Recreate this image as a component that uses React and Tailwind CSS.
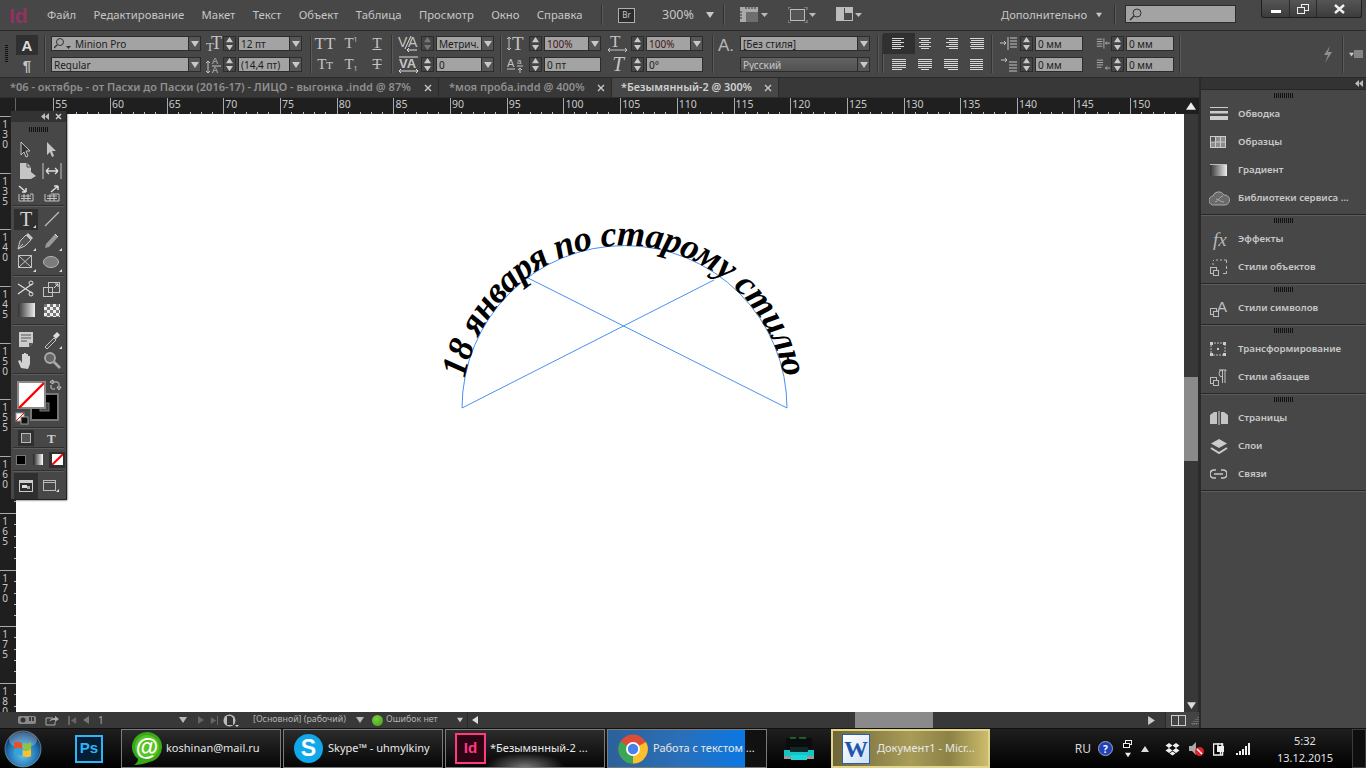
import React from "react";

const Tri = ({ d = "down", c = "#c8c8c8", s = 7 }) => (
  <svg width={s} height={s} viewBox="0 0 8 8" className="shrink-0">
    <polygon fill={c} points={d === "down" ? "0,1 8,1 4,7" : d === "up" ? "0,7 8,7 4,1" : d === "left" ? "7,0 7,8 1,4" : "1,0 1,8 7,4"} />
  </svg>
);

const Sep = ({ ml = "" }) => <div className={`w-px h-[38px] bg-[#333] border-r border-[#5a5a5a] box-content shrink-0 ${ml}`} />;

const Spinner = ({ dim }) => (
  <div className="w-[13px] h-[15px] shrink-0 bg-[#444] border border-[#2c2c2c] flex flex-col items-center justify-center gap-px">
    <Tri d="up" s={7} c={dim ? "#777" : "#c8c8c8"} />
    <Tri d="down" s={7} c={dim ? "#777" : "#c8c8c8"} />
  </div>
);

const Field = ({ w, text, arrow, color = "text-[#1d1d1d]", dark, icon }) => (
  <div className={`${w} h-[15px] shrink-0 flex border border-[#2c2c2c] ${dark ? "bg-[linear-gradient(#626262,#525252)]" : "bg-[#a3a3a3]"}`}>
    <div className={`flex-1 min-w-0 flex items-center pl-[2px] text-[10px] leading-none whitespace-nowrap overflow-hidden ${dark ? "text-[#c8c8c8]" : color}`}>
      {icon}
      {text}
    </div>
    {arrow && (
      <div className="w-[12px] bg-[#565656] border-l border-[#2c2c2c] flex items-center justify-center">
        <Tri s={8} />
      </div>
    )}
  </div>
);

const I = ({ w = 20, h = 20, vb, children, className = "" }) => (
  <svg width={w} height={h} viewBox={vb || `0 0 ${w} ${h}`} className={`shrink-0 ${className}`} fill="none">
    {children}
  </svg>
);

const Corner = () => <polygon points="17,20 20,17 20,20" fill="#ddd" />;
const L = "#c4c4c4";

const Row2 = ({ a, b, className = "" }) => (
  <div className={`flex flex-col gap-[6px] shrink-0 ${className}`}>
    <div className="flex items-center h-[15px]">{a}</div>
    <div className="flex items-center h-[15px]">{b}</div>
  </div>
);

const Serif = ({ children, className = "" }) => (
  <span className={`font-['Liberation_Serif'] text-[#c4c4c4] leading-none ${className}`}>{children}</span>
);

const AlignIcon = ({ widths, x = "l" }) => (
  <I w={14} h={14}>
    {widths.map((wd, i) => (
      <rect key={i} x={x === "l" ? 0 : x === "c" ? (14 - wd) / 2 : 14 - wd} y={1 + i * 2} width={wd} height="1" fill="#d8d8d8" />
    ))}
  </I>
);

const Menu = ["Файл", "Редактирование", "Макет", "Текст", "Объект", "Таблица", "Просмотр", "Окно", "Справка"];

function TitleBar() {
  return (
    <div className="h-[31px] shrink-0 flex items-center bg-[#474747] border-b border-[#2a2a2a] text-[#c6c6c6] text-[11.3px]">
      <div className="w-[47px] pl-[9px] font-['Liberation_Sans'] font-bold text-[21px] leading-none text-[#94325f]">Id</div>
      <div className="w-[554px] flex gap-[17.4px] whitespace-nowrap">
        {Menu.map((m) => (
          <span key={m}>{m}</span>
        ))}
      </div>
      <div className="w-px h-[20px] bg-[#303030] border-r border-[#5a5a5a] box-content" />
      <div className="ml-[15px] w-[17px] h-[15px] border border-[#b0b0b0] bg-[#2c2c2c] flex items-center justify-center text-[8px] leading-none">Br</div>
      <span className="ml-[27px] w-[44px] text-[12.5px]">300%</span>
      <Tri s={8} />
      <div className="ml-[9px] w-px h-[20px] bg-[#303030] border-r border-[#5a5a5a] box-content" />
      <I w={28} h={16} className="ml-[15px]">
        <rect x="0" y="0" width="18" height="15" fill="#aaa" />
        <rect x="6" y="5" width="12" height="10" fill="#6e6e6e" />
        <path d="M6 0v2M9 0v2M12 0v2M15 0v2M0 5h2M0 8h2M0 11h2" stroke="#333" />
        <polygon points="21,6 28,6 24.5,10" fill="#bbb" />
      </I>
      <I w={28} h={16} className="ml-[20px]">
        <rect x="2.5" y="2.5" width="14" height="11" stroke="#bbb" fill="#555" />
        <path d="M0 3V0h3M16 0h3v3M0 13v3h3M19 13v3h-3" stroke="#999" />
        <polygon points="21,6 28,6 24.5,10" fill="#bbb" />
      </I>
      <I w={26} h={16} className="ml-[20px]">
        <rect x="0.5" y="0.5" width="16" height="13" stroke="#bbb" fill="#4a4a4a" />
        <rect x="1" y="1" width="7" height="12" fill="#bdbdbd" />
        <rect x="9" y="1" width="7" height="5" fill="#bdbdbd" />
        <polygon points="19,6 26,6 22.5,10" fill="#bbb" />
      </I>
      <div className="ml-[139px] w-[95px] text-[11.2px] whitespace-nowrap">Дополнительно</div>
      <Tri s={6} />
      <div className="ml-[12px] w-px h-[20px] bg-[#303030] border-r border-[#5a5a5a] box-content" />
      <div className="ml-[9px] w-[111px] h-[18px] bg-[#a3a3a3] border border-[#2c2c2c] flex items-center pl-[2px] self-start mt-[5px]">
        <I w={15} h={15}>
          <circle cx="9" cy="6" r="4" stroke="#333" />
          <path d="M6 9L2 13" stroke="#333" strokeWidth="1.5" />
        </I>
      </div>
      <div className="ml-[25px] w-[101px] h-[18px] self-start flex bg-[linear-gradient(#555,#3c3c3c)] border border-t-0 border-[#1f1f1f] rounded-b-[3px]">
        <div className="w-[28px] flex items-end justify-center pb-[4px] border-r border-[#2a2a2a]"><div className="w-[10px] h-[3px] bg-white" /></div>
        <div className="w-[27px] flex items-center justify-center border-r border-[#2a2a2a]">
          <I w={12} h={10}>
            <rect x="4.5" y="0.5" width="7" height="6" stroke="#eee" />
            <rect x="0.5" y="3.5" width="7" height="6" stroke="#eee" fill="#4a4a4a" />
          </I>
        </div>
        <div className="flex-1 flex items-center justify-center">
          <I w={11} h={10}><path d="M1 1l9 8M10 1L1 9" stroke="#eee" strokeWidth="2.4" /></I>
        </div>
      </div>
    </div>
  );
}

const SVGT = ({ x, y, s, children, f = "Liberation Serif", w = 400, st = "normal" }) => (
  <text x={x} y={y} fontSize={s} fill="#c4c4c4" fontFamily={f} fontWeight={w} fontStyle={st}>{children}</text>
);

function ControlBar() {
  const mm = <Field w="w-[48px]" text="0 мм" />;
  return (
    <div className="h-[47px] shrink-0 flex items-center bg-[#474747] border-b border-[#2a2a2a]">
      <div className="w-[44px] shrink-0 flex items-center">
        <div className="ml-[5px] w-[3px] h-[18px] bg-[repeating-linear-gradient(#111_0,#111_1px,transparent_1px,transparent_2px)]" />
        <div className="ml-[8px] w-[22px] flex flex-col items-center gap-[3px]">
          <div className="w-[22px] h-[20px] bg-[#303030] flex items-center justify-center text-[#ddd] text-[15px] leading-none font-['Liberation_Sans'] font-bold">A</div>
          <span className="text-[#c4c4c4] text-[15px] leading-none font-['Liberation_Sans'] font-bold">¶</span>
        </div>
      </div>
      <Sep />
      <Row2
        className="ml-[5px]"
        a={<>
          <Field w="w-[150px]" arrow text="Minion Pro" icon={<I w={20} h={13} vb="0 0 20 13" className="mr-px"><circle cx="6" cy="5" r="3.5" stroke="#333" /><path d="M3 8L0 11" stroke="#333" strokeWidth="1.4" /><polygon points="12,9 17,9 14.5,12" fill="#333" /></I>} />
          <I w={17} h={17} className="ml-[5px]"><SVGT x="0" y="16" s="13">T</SVGT><SVGT x="5" y="14" s="18">T</SVGT></I>
          <Spinner /><span className="w-[2px]" /><Field w="w-[64px]" arrow text="12 пт" />
        </>}
        b={<>
          <Field w="w-[150px]" arrow text="Regular" />
          <I w={17} h={18} className="ml-[5px]"><path d="M2 5v12M0 7l2-2 2 2M0 15l2 2 2-2" stroke={L} /><SVGT x="6" y="8" s="9" f="Liberation Sans">A</SVGT><SVGT x="6" y="17" s="9" f="Liberation Sans">A</SVGT><path d="M6 10h9" stroke={L} /></I>
          <Spinner /><span className="w-[2px]" /><Field w="w-[64px]" arrow text="(14,4 пт)" />
        </>}
      />
      <Sep ml="ml-[8px]" />
      <div className="w-[79px] shrink-0 grid grid-cols-[26px_26px_26px] gap-y-[6px]">
        {[["TT", ""], ["T", "1"], ["T", "_"], ["Tт", ""], ["T", "₁"], ["T", "-"]].map(([t, x], i) => (
          <div key={i} className="h-[15px] flex items-center justify-center">
            <Serif className={`text-[15px] ${t === "TT" ? "text-[17px]" : ""} ${x === "_" ? "underline" : x === "-" ? "line-through" : ""}`}>{t}</Serif>
            {x === "1" && <span className="text-[7px] text-[#c4c4c4] leading-none self-start">1</span>}
            {x === "₁" && <span className="text-[7px] text-[#c4c4c4] leading-none self-end">1</span>}
          </div>
        ))}
      </div>
      <Sep />
      <Row2
        className="ml-[5px]"
        a={<>
          <I w={21} h={17}><SVGT x="0" y="12" s="14" f="Liberation Sans">V</SVGT><SVGT x="10" y="12" s="14" f="Liberation Sans">A</SVGT><path d="M7 14L13 1" stroke="#ddd" /><path d="M9 15h10M9 15l2-2M9 15l2 2" stroke="#ddd" /></I>
          <span className="w-[2px]" /><Spinner dim /><span className="w-[2px]" /><Field w="w-[58px]" arrow text="Метрич." />
        </>}
        b={<>
          <I w={21} h={17}><path d="M1 1h19" stroke="#ddd" /><SVGT x="1" y="12" s="13" f="Liberation Sans" w={700}>VA</SVGT><path d="M1 15h19M1 15l2-2M1 15l2 2M20 15l-2-2M20 15l-2 2" stroke="#ddd" /></I>
          <span className="w-[2px]" /><Spinner /><span className="w-[2px]" /><Field w="w-[58px]" arrow text="0" />
        </>}
      />
      <Sep ml="ml-[6px]" />
      <Row2
        className="ml-[5px]"
        a={<>
          <I w={20} h={17}><path d="M2 2v13M0 4l2-2 2 2M0 13l2 2 2-2" stroke={L} /><SVGT x="5" y="15" s="19">T</SVGT></I>
          <span className="w-[2px]" /><Spinner /><span className="w-[2px]" /><Field w="w-[57px]" arrow text="100%" color="text-[#451414]" />
          <I w={20} h={17} className="ml-[7px]"><SVGT x="2" y="12" s="17">T</SVGT><path d="M0 15h19M0 15l2-2M0 15l2 2M19 15l-2-2M19 15l-2 2" stroke={L} /></I>
          <span className="w-[3px]" /><Spinner /><span className="w-[2px]" /><Field w="w-[57px]" arrow text="100%" color="text-[#451414]" />
        </>}
        b={<>
          <I w={20} h={17}><SVGT x="0" y="11" s="11" f="Liberation Sans">A</SVGT><SVGT x="10" y="8" s="8" f="Liberation Sans">a</SVGT><path d="M0 13h8M10 10h6M13 17v-5M11 14l2-2 2 2" stroke={L} /></I>
          <span className="w-[2px]" /><Spinner /><span className="w-[2px]" /><Field w="w-[57px]" text="0 пт" />
          <Serif className="w-[20px] ml-[7px] text-[21px] italic text-center">T</Serif><span className="w-[3px]" /><Spinner /><span className="w-[2px]" /><Field w="w-[57px]" text="0°" />
        </>}
      />
      <Sep ml="ml-[9px]" />
      <div className="w-[28px] shrink-0 ml-[4px] flex items-start mb-[18px] text-[#b8b8b8] text-[17px] leading-none font-['Liberation_Sans']">A.</div>
      <div className="flex flex-col gap-[6px] shrink-0 ml-[-6px]">
        <Field w="w-[130px]" arrow text="[Без стиля]" />
        <Field w="w-[130px]" arrow dark text="Русский" />
      </div>
      <Sep ml="ml-[7px]" />
      <Sep ml="ml-[3px]" />
      <div className="w-[105px] shrink-0 ml-[2px] grid grid-cols-[26px_26px_26px_26px] gap-y-[6px]">
        {[
          [[12, 9, 12, 9, 12, 9], "l"], [[12, 8, 12, 8, 12, 8], "c"], [[12, 9, 12, 9, 12, 9], "r"], [[14, 13, 14, 13, 14, 13], "r"],
          [[14, 14, 14, 14, 14, 10], "l"], [[14, 14, 14, 14, 14, 8], "c"], [[14, 14, 14, 14, 14, 10], "r"], [[13, 13, 13, 13, 13, 13], "l"],
        ].map(([w, x], i) => (
          <div key={i} className={`h-[15px] flex items-center justify-center ${i === 0 ? "bg-[#303030] outline-3 outline-[#303030]" : ""}`}>
            <AlignIcon widths={w} x={x} />
          </div>
        ))}
      </div>
      <Sep />
      <Row2
        className="ml-[7px]"
        a={<>
          <I w={20} h={15}><path d="M0 7h6M4 5l2 2-2 2" stroke={L} /><path d="M8 1v13" stroke={L} /><path d="M10 2h7M10 5h7M10 8h7M10 11h7" stroke={L} /></I><Spinner /><span className="w-[2px]" />{mm}
          <I w={15} h={15} vb="0 0 19 15" className="ml-[13px]"><path d="M1 2h7M1 5h7M1 8h7M1 11h7M10 1v13" stroke={L} /><path d="M18 7h-6M14 5l-2 2 2 2" stroke={L} /></I><Spinner /><span className="w-[2px]" />{mm}
        </>}
        b={<>
          <I w={20} h={15}><path d="M1 3h6M5 1l2 2-2 2" stroke={L} /><path d="M9 5h8M9 8h8M9 11h8M9 14h8" stroke={L} /></I><Spinner /><span className="w-[2px]" />{mm}
          <I w={15} h={15} vb="0 0 19 15" className="ml-[13px]"><path d="M1 2h8M1 5h8M1 8h8M1 11h6" stroke={L} /><path d="M18 12h-6M14 10l-2 2 2 2" stroke={L} /></I><Spinner /><span className="w-[2px]" />{mm}
        </>}
      />
      <Sep ml="ml-[5px]" />
      <div className="w-[161px] shrink-0 flex justify-end pr-[8px]">
        <I w={12} h={17}><polygon points="8,0 2,9 6,9 3,17 10,6 6,6" fill="#8e8e8e" /></I>
      </div>
      <Sep />
      <div className="ml-[5px] flex items-center">
        <Tri s={5} />
        <I w={9} h={9}><path d="M0 1h9M0 3h9M0 5h9M0 7h9" stroke="#c4c4c4" /></I>
      </div>
    </div>
  );
}

function Tabs() {
  const Tab = ({ t, w, x, active, size }) => (
    <div className={`${w} h-full shrink-0 flex items-center border-r border-[#2a2a2a] font-semibold whitespace-nowrap ${size} ${active ? "bg-[#474747] text-[#d0d0d0]" : "text-[#8f8f8f]"}`}>
      <span className={`flex-1 min-w-0 ${x}`}>{t}</span>
      <I w={8} h={8} className="mr-[6px]"><path d="M1 1l6 6M7 1L1 7" stroke="#c8c8c8" strokeWidth="1.4" /></I>
    </div>
  );
  return (
    <div className="h-[19px] shrink-0 flex bg-[#383838] border-b border-[#2e2e2e] box-content">
      <Tab w="w-[439px]" size="text-[11px]" x="pl-[10px]" t="*06 - октябрь - от Пасхи до Пасхи (2016-17) - ЛИЦО - выгонка .indd @ 87%" />
      <Tab w="w-[173px]" size="text-[11px]" x="pl-[10px]" t="*моя проба.indd @ 400%" />
      <Tab w="w-[167px]" size="text-[10.8px]" x="pl-[9px]" active t="*Безымянный-2 @ 300%" />
    </div>
  );
}

const H = [55, 60, 65, 70, 75, 80, 85, 90, 95, 100, 105, 110, 115, 120, 125, 130, 135, 140, 145, 150];
const V = [130, 135, 140, 145, 150, 155, 160, 165, 170, 175, 180];

function TopRuler() {
  return (
    <div className="h-[16px] shrink-0 flex bg-[#1f1f1f] text-[#c8c8c8] overflow-hidden">
      <div className="w-[53.3px] shrink-0 relative">
        <div className="absolute left-0 top-0 w-[16px] h-full border-r border-[#666]" />
      </div>
      {H.map((n) => (
        <div key={n} className="w-[56.7px] shrink-0 h-full border-l border-[#aaa] flex flex-col justify-between">
          <span className="pl-[1px] text-[10.5px] leading-[13px]">{n}</span>
          <div className="h-[2px] bg-[repeating-linear-gradient(90deg,transparent_0,transparent_10.3px,#bbb_10.3px,#bbb_11.34px)]" />
        </div>
      ))}
    </div>
  );
}

function LeftRuler() {
  return (
    <div className="w-[16px] shrink-0 bg-[#1f1f1f] text-[#c8c8c8] overflow-hidden flex flex-col pt-[2px]">
      {V.map((n) => (
        <div key={n} className="h-[56.7px] shrink-0 border-t border-[#aaa] flex">
          <div className="flex flex-col items-center w-[10px] pt-[2px] text-[10px] leading-[10px]">
            {String(n).split("").map((d, i) => <span key={i}>{d}</span>)}
          </div>
          <div className="w-[2px] ml-auto bg-[repeating-linear-gradient(transparent_0,transparent_10.3px,#bbb_10.3px,#bbb_11.34px)]" />
        </div>
      ))}
    </div>
  );
}

function Canvas() {
  return (
    <div className="flex-1 min-w-0 bg-white relative overflow-hidden">
      <svg className="absolute inset-0" width="1168" height="599" viewBox="16 113 1168 599" fill="none">
        <path id="arc" d="M462 407A162.5 162.5 0 0 1 787 407" stroke="#4a90f0" strokeWidth="1" />
        <path d="M462 407L714 279M787 407L528 277" stroke="#4a90f0" strokeWidth="1" />
        <text fontFamily="Liberation Serif" fontStyle="italic" fontWeight="700" fontSize="36" fill="#000">
          <textPath href="#arc" startOffset="30" textLength="450" lengthAdjust="spacing">18 января по старому стилю</textPath>
        </text>
      </svg>
    </div>
  );
}

function VScroll() {
  return (
    <div className="w-[14px] shrink-0 bg-[#383838] flex flex-col items-center">
      <div className="h-[263px] w-full flex justify-center"><span className="mt-[-13px] h-0"><Tri d="up" s={10} c="#eee" /></span></div>
      <div className="h-[84px] w-full bg-[#8a8a8a]" />
      <div className="flex-1" />
      <div className="h-[14px] flex items-center"><Tri s={9} c="#ddd" /></div>
    </div>
  );
}

const T = ({ children }) => (
  <div className="w-[26px] h-[21.5px] flex items-center justify-center">
    <I w={20} h={20}>{children}</I>
  </div>
);
const TS = () => <div className="h-px mx-[2px] bg-[#2f2f2f] border-b border-[#5c5c5c] box-content" />;

function Toolbox() {
  return (
    <div className="absolute left-[11px] top-[111px] w-[56px] h-[389px] bg-[#474747] border-r border-b border-[#222] shadow-[0_0_2px_#222] flex flex-col z-10">
      <div className="h-[11px] bg-[#333] flex items-center justify-end gap-[6px] pr-[4px] shrink-0">
        <I w={8} h={7}><polygon points="4,0 4,7 0,3.5" fill="#bbb" /><polygon points="8,0 8,7 4,3.5" fill="#bbb" /></I>
        <I w={7} h={7}><path d="M1 1l5 5M6 1L1 6" stroke="#ccc" strokeWidth="1.5" /></I>
      </div>
      <div className="h-[17px] shrink-0 flex items-center justify-center pb-[2px]">
        <div className="w-[20px] h-[5px] bg-[repeating-linear-gradient(90deg,#111_0,#111_1px,transparent_1px,transparent_2px)]" />
      </div>
      <div className="grid grid-cols-2 px-[2px]">
        <T><path d="M5 2l9 9h-4l2 5-2 1-2-5-3 3z" stroke={L} fill="#333" /></T>
        <T><path d="M5 2l9 9h-4l2 5-2 1-2-5-3 3z" fill={L} /></T>
        <T><path d="M4 2h7l4 4v5l5 4-5 3H4z" fill={L} /><path d="M11 2v4h4" stroke="#474747" /></T>
        <T><path d="M1 2v16M19 2v16" stroke={L} /><path d="M4 10h12M4 10l3-3M4 10l3 3M16 10l-3-3M16 10l-3 3" stroke="#ddd" strokeWidth="1.3" /></T>
        <T><path d="M3 11v7h14v-7h-3" stroke={L} /><path d="M3 3l7 6M10 9V5M10 9H6" stroke="#ddd" strokeWidth="1.5" /><path d="M5 13h10M5 15.5h10M8 11v7M12 11v7" stroke={L} /></T>
        <T><path d="M3 11v7h14v-7H9" stroke={L} /><path d="M16 3l-7 6M16 3v4M16 3h-4" stroke="#ddd" strokeWidth="1.5" /><path d="M5 13h10M5 15.5h10M8 11v7M12 11v7" stroke={L} /></T>
      </div>
      <div className="h-[2px] mt-[1px] mb-[2px] shrink-0"><TS /></div>
      <div className="grid grid-cols-2 px-[2px]">
        <div className="w-[26px] h-[21.5px] flex items-center justify-center relative">
          <div className="absolute inset-x-px inset-y-0 bg-[#2f2f2f]" />
          <span className="relative font-['Liberation_Serif'] text-[20px] leading-none text-[#d4d4d4]">T</span>
          <span className="absolute right-[3px] bottom-[2px]"><I w={3} h={3}><polygon points="0,3 3,0 3,3" fill="#ddd" /></I></span>
        </div>
        <T><path d="M3 17L17 3" stroke="#bbb" strokeWidth="1.2" /></T>
        <T><path d="M2 18l2-8 6-6 5 5-6 6z" stroke={L} fill="#555" /><path d="M10 4l2-2 5 5-2 2" fill={L} /><path d="M2 18l5-5" stroke={L} /><Corner /></T>
        <T><path d="M3 17l1-4L13 3l3 3-9 10z" fill="#999" /><path d="M13 3l3 3" stroke="#ddd" /><Corner /></T>
        <T><rect x="2.5" y="3.5" width="13" height="12" stroke={L} /><path d="M3 4l12 11M15 4L3 15" stroke={L} /><Corner /></T>
        <T><ellipse cx="9" cy="10" rx="7.5" ry="5.5" fill="#7c7c7c" stroke="#b4b4b4" /><Corner /></T>
      </div>
      <div className="h-[2px] mt-[2px] mb-[1px] shrink-0"><TS /></div>
      <div className="grid grid-cols-2 px-[2px]">
        <T><path d="M2 5l14 9M2 15l14-10" stroke="#ddd" strokeWidth="1.2" /><circle cx="15" cy="4" r="2" stroke="#ddd" /><circle cx="15" cy="15" r="2" stroke="#ddd" /></T>
        <T><rect x="1.5" y="8.5" width="9" height="9" stroke={L} /><rect x="6.5" y="3.5" width="11" height="10" stroke={L} /><path d="M12 9l4-4M16 5h-3M16 5v3" stroke="#ddd" /></T>
        <div className="w-[26px] h-[21.5px] flex items-center justify-center"><div className="w-[17px] h-[14px] bg-[linear-gradient(90deg,#333,#eee)]" /></div>
        <div className="w-[26px] h-[21.5px] flex items-center justify-center"><div className="w-[16px] h-[13px] bg-[conic-gradient(#eee_25%,#777_0_50%,#eee_0_75%,#777_0)] bg-[length:6px_6px]" /></div>
      </div>
      <div className="h-[2px] mt-[3px] mb-[2px] shrink-0"><TS /></div>
      <div className="grid grid-cols-2 px-[2px]">
        <T><path d="M3 3h14v11l-4 4H3z" fill="#ccc" /><path d="M5 6h10M5 9h10M5 12h6" stroke="#555" /><path d="M13 18v-4h4" fill="#555" /></T>
        <T><path d="M3 18l9-9 2 2-9 9z" stroke={L} /><path d="M11 7l4-4 3 3-4 4z" fill="#ddd" /><Corner /></T>
        <T><path d="M5 18l-3-7 2-1 2 3V4h2v6-7h2v7-6h2v6-4h2v8l-2 5z" fill="#d2d2d2" /></T>
        <T><circle cx="8" cy="8" r="5" stroke="#aaa" strokeWidth="1.8" fill="#666" /><path d="M12 12l6 6" stroke="#aaa" strokeWidth="2.6" /></T>
      </div>
      <div className="h-[2px] mt-[2px] shrink-0"><TS /></div>
      <div className="h-[52px] shrink-0 pl-[4px]">
        <svg width="50" height="52" viewBox="0 0 50 52" fill="none">
          <rect x="16" y="19" width="27" height="26" fill="#000" stroke="#777" strokeWidth="2" />
          <rect x="25" y="28" width="9" height="8" fill="#474747" stroke="#777" />
          <rect x="3" y="7" width="27" height="26" fill="#fff" stroke="#8a8a8a" strokeWidth="2" />
          <path d="M4 33L29 8" stroke="#f00" strokeWidth="2.4" />
          <path d="M35 7l3-2v4zM38 7h4c2 0 2 2 2 4M44 15l-2-3h4zM36 10v3c0 1 2 1 4 1" stroke="#ccc" />
          <rect x="1" y="38" width="8" height="8" fill="#fff" stroke="#999" />
          <path d="M1 46l8-8" stroke="#f00" />
          <rect x="6" y="42" width="7" height="7" stroke="#999" fill="#111" />
        </svg>
      </div>
      <div className="h-[2px] shrink-0"><TS /></div>
      <div className="h-[18px] shrink-0 grid grid-cols-2 px-[2px]">
        <div className="flex items-center justify-center"><div className="w-[16px] h-[16px] bg-[#2f2f2f] flex items-center justify-center"><div className="w-[10px] h-[10px] border border-[#bbb] bg-[#555]" /></div></div>
        <div className="flex items-center justify-center"><span className="font-['Liberation_Serif'] font-bold text-[13px] leading-none text-[#ccc]">T</span></div>
      </div>
      <div className="h-[2px] shrink-0"><TS /></div>
      <div className="h-[21px] shrink-0 flex items-center pl-[5px] gap-[6px]">
        <div className="w-[10px] h-[10px] bg-black border border-[#777]" />
        <div className="w-[10px] h-[11px] bg-[linear-gradient(90deg,#222,#fff)] ml-[1px]" />
        <div className="w-[16px] h-[16px] bg-[#2f2f2f] flex items-center justify-center">
          <svg width="11" height="11" viewBox="0 0 11 11"><rect width="11" height="11" fill="#fff" /><path d="M0 11L11 0" stroke="#f00" strokeWidth="2" /></svg>
        </div>
      </div>
      <div className="h-[2px] shrink-0"><TS /></div>
      <div className="flex-1 grid grid-cols-2 px-[2px] pt-[1px]">
        <div className="flex items-center justify-center bg-[#2f2f2f] mx-[1px]">
          <I w={14} h={12}><rect x="0.5" y="0.5" width="13" height="11" stroke="#ccc" /><rect x="1" y="1" width="12" height="2" fill="#ccc" /><rect x="3" y="5" width="5" height="3" fill="#ddd" /><rect x="8" y="6" width="3" height="3" fill="#aaa" /></I>
        </div>
        <div className="flex items-center justify-center">
          <I w={16} h={14}><rect x="0.5" y="1.5" width="12" height="10" stroke="#bbb" /><path d="M1 3.5h11" stroke="#bbb" /><polygon points="13,13 16,10 16,13" fill="#ddd" /></I>
        </div>
      </div>
    </div>
  );
}

function Status() {
  return (
    <div className="h-[16px] shrink-0 flex items-center bg-[#383838] text-[#b4b4b4] text-[8.8px] whitespace-nowrap">
      <I w={18} h={10} className="ml-[18px]"><rect x="0" y="1" width="18" height="8" rx="2" fill="#8a8a8a" /><circle cx="5" cy="5" r="2.5" fill="#333" /><path d="M12 2v4M15 2v4M12 8h.1M15 8h.1" stroke="#222" strokeWidth="1.5" /></I>
      <I w={14} h={11} className="ml-[9px]"><path d="M1 3h7M1 3v7h9V7" stroke="#aaa" /><path d="M4 7c1-3 4-4 6-4V1l4 3-4 3V5c-2 0-4 0-6 2z" fill="#aaa" /></I>
      <span className="ml-[9px] w-[2px] h-[9px] bg-[#666]" /><Tri d="left" s={7} c="#666" />
      <span className="ml-[5px]"><Tri d="left" s={8} c="#777" /></span>
      <span className="ml-[7px] w-[82px] text-[#aaa] pl-[1px] text-[10px]">1</span>
      <Tri s={8} c="#b8b8b8" />
      <span className="ml-[10px]"><Tri d="right" s={8} c="#666" /></span>
      <span className="ml-[5px] flex items-center"><Tri d="right" s={7} c="#666" /><span className="w-px h-[9px] bg-[#666]" /></span>
      <I w={16} h={13} className="ml-[5px]"><circle cx="6.5" cy="6.5" r="6" fill="#bbb" /><path d="M4 2h4l2 2v7H4z" fill="#333" /><polygon points="12,11 16,11 14,13" fill="#ccc" /></I>
      <span className="ml-[14px] w-[103px]">[Основной] (рабочий)</span>
      <Tri s={8} c="#b8b8b8" />
      <span className="ml-[8px] w-[11px] h-[11px] rounded-full bg-[radial-gradient(circle_at_40%_35%,#7ccf3c,#3f9a1c)]" />
      <span className="ml-[3px] w-[71px]">Ошибок нет</span>
      <Tri s={6} c="#ccc" />
      <span className="ml-[4px] w-px h-full bg-[#2a2a2a]" />
      <span className="ml-[3px]"><Tri d="left" s={8} c="#ddd" /></span>
      <div className="w-[376px] shrink-0" />
      <div className="w-[78px] h-full bg-[#8a8a8a] shrink-0" />
      <div className="flex-1" />
      <Tri d="right" s={9} c="#ccc" />
      <div className="ml-[9px] h-full w-px bg-[#2a2a2a]" />
      <div className="w-[33px] h-full bg-[#444] flex items-center pl-[5px] gap-[4px]">
        <I w={15} h={11}><rect x="0.5" y="0.5" width="14" height="10" stroke="#ccc" /><path d="M7.5 0v11" stroke="#ccc" /></I>
        <I w={9} h={9}><path d="M8 1v7M6 3v5M4 5v3M2 7v1M2 8h6" stroke="#888" strokeDasharray="1 1" /></I>
      </div>
    </div>
  );
}

const DI = ({ icon, t }) => (
  <div className="h-[28px] flex items-center">
    <div className="w-[37px] shrink-0 pl-[9px] flex items-center justify-start">{icon}</div>
    <span className="text-[9.7px] font-semibold text-[#c8c8c8] whitespace-nowrap">{t}</span>
  </div>
);
const DG = ({ children }) => (
  <div className="border-b border-[#282828] pb-[2px] shadow-[0_1px_0_#5c5c5c]">
    <div className="h-[10px] flex items-center justify-center">
      <div className="w-[20px] h-[5px] bg-[repeating-linear-gradient(90deg,#111_0,#111_1px,transparent_1px,transparent_2px)]" />
    </div>
    {children}
  </div>
);
const SmallSq = () => (
  <g><rect x="0.5" y="9.5" width="6" height="6" stroke="#bbb" /><rect x="3.5" y="12.5" width="5" height="5" stroke="#bbb" fill="#474747" /></g>
);

function Dock() {
  return (
    <div className="flex-1 min-w-0 bg-[#474747] flex flex-col border-l-2 border-[#2a2a2a]">
      <div className="h-[11px] bg-[#333] border-b border-[#262626] flex items-center justify-end pr-[3px] box-content">
        <I w={8} h={7}><polygon points="4,0 4,7 0,3.5" fill="#bbb" /><polygon points="8,0 8,7 4,3.5" fill="#bbb" /></I>
      </div>
      <DG>
        <DI t="Обводка" icon={<I w={18} h={14}><rect y="0" width="18" height="1" fill="#ccc" /><rect y="4" width="18" height="2.5" fill="#ccc" /><rect y="9" width="18" height="4" fill="#ccc" /></I>} />
        <DI t="Образцы" icon={<I w={16} h={12}><rect x="0.5" y="0.5" width="15" height="11" fill="#8c8c8c" stroke="#ccc" /><path d="M5.5 0v12M10.5 0v12M0 6h16" stroke="#ccc" /><rect x="1" y="1" width="4" height="4.5" fill="#555" /></I>} />
        <DI t="Градиент" icon={<div className="w-[17px] h-[12px] bg-[linear-gradient(90deg,#333,#eee)] border-t border-[#bbb]" />} />
        <DI t="Библиотеки сервиса ..." icon={<I w={21} h={15} className="ml-[-1px]"><path d="M5 14a4.5 4.5 0 0 1-1-9 6 6 0 0 1 11-1 5 5 0 0 1 1 10z" fill="#6a6a6a" stroke="#aaa" /><path d="M6 11c3 0 5-6 8-6M7 8c3 0 4 3 8 3" stroke="#aaa" /></I>} />
      </DG>
      <DG>
        <DI t="Эффекты" icon={<span className="font-['Liberation_Serif'] italic text-[19px] leading-none text-[#b8b8b8] pl-[3px]">fx</span>} />
        <DI t="Стили объектов" icon={<I w={18} h={18}><path d="M6 2h2M10 2h2M14 2h2.5v3M16.5 8v3M16.5 13v2.5H13M3 2.5h1M3 5v2" stroke="#bbb" /><SmallSq /></I>} />
      </DG>
      <DG>
        <DI t="Стили символов" icon={<I w={18} h={18}><text x="7" y="13" fontSize="15" fill="#c0c0c0" fontFamily="Liberation Sans">A</text><SmallSq /></I>} />
      </DG>
      <DG>
        <DI t="Трансформирование" icon={<I w={16} h={14}><path d="M1 1h14v12H1z" stroke="#bbb" strokeDasharray="2 1" /><rect x="0" y="0" width="3" height="3" fill="#ccc" /><rect x="13" y="0" width="3" height="3" fill="#ccc" /><rect x="0" y="11" width="3" height="3" fill="#ccc" /><rect x="13" y="11" width="3" height="3" fill="#ccc" /><rect x="7" y="6" width="2" height="2" fill="#ccc" /></I>} />
        <DI t="Стили абзацев" icon={<I w={18} h={18}><path d="M9 2h7v1M15 2v13M12.5 2v13M12.5 9a3.5 3.5 0 0 1 0-7" stroke="#c0c0c0" /><SmallSq /></I>} />
      </DG>
      <DG>
        <DI t="Страницы" icon={<I w={18} h={14}><path d="M0 13V4l4-3h3v12zM11 13V1h3l4 3v9z" fill="#c4c4c4" /><path d="M9 0v15" stroke="#ddd" /></I>} />
        <DI t="Слои" icon={<I w={18} h={15}><path d="M9 0l8 4.5L9 9 1 4.5z" fill="#ccc" /><path d="M1 9l8 5 8-5" stroke="#ccc" strokeWidth="2" /></I>} />
        <DI t="Связи" icon={<I w={17} h={12}><path d="M6 2H4a4 4 0 0 0 0 8h2M11 2h2a4 4 0 0 1 0 8h-2M4 6h9" stroke="#c8c8c8" strokeWidth="1.6" /></I>} />
      </DG>
    </div>
  );
}

const TB = ({ w, ml, children, t, cls = "" }) => (
  <div className={`${w} ${ml} h-[39px] shrink-0 border border-[#7b7b7b] flex items-center text-[11px] text-[#e8e8e8] whitespace-nowrap overflow-hidden ${cls || "bg-[linear-gradient(#2c2c2c,#050505)]"}`}>
    {children}
    <span>{t}</span>
  </div>
);

function Taskbar() {
  return (
    <div className="h-[40px] shrink-0 flex items-center bg-[linear-gradient(#1f1f1f,#000)] border-t border-[#111] text-white">
      <svg width="38" height="38" viewBox="0 0 38 38" className="ml-[4px] shrink-0">
        <defs><radialGradient id="o" cx="50%" cy="65%" r="60%"><stop offset="0" stopColor="#6cc4e8" /><stop offset="0.7" stopColor="#1d6fb0" /><stop offset="1" stopColor="#0c3560" /></radialGradient></defs>
        <circle cx="19" cy="19" r="18" fill="url(#o)" stroke="#9ab" strokeOpacity=".6" />
        <ellipse cx="19" cy="10" rx="14" ry="8" fill="#fff" opacity=".25" />
        <path d="M10 13c3-2 5-1 8 0v6c-3-1-5-2-8 0z" fill="#e8502a" />
        <path d="M19 13c3 1 5 1 8-1v7c-3 2-5 1-8 0z" fill="#8cc63f" />
        <path d="M10 20c3-2 5-1 8 0v6c-3-1-5-2-8 0z" fill="#35a4dc" />
        <path d="M19 20c3 1 5 1 8-1v7c-3 2-5 1-8 0z" fill="#f6c32d" />
      </svg>
      <div className="ml-[33px] w-[28px] h-[28px] shrink-0 border-2 border-[#2fb4f5] bg-[#061e33] flex items-center justify-center font-['Liberation_Sans'] font-bold text-[15px] text-[#2fb4f5]">Ps</div>
      <TB w="w-[160px]" ml="ml-[18px]" t="koshinan@mail.ru">
        <svg width="32" height="33" viewBox="0 0 32 33" className="ml-[9px] mr-[3px] shrink-0">
          <path d="M16 0a15 15 0 0 1 3 29.7C14 32 8 33 3 33c3-2 4-4 4-6A15 15 0 0 1 16 0z" fill="#3aa81a" />
          <circle cx="16" cy="15" r="12" fill="#55c422" />
          <text x="16" y="23" textAnchor="middle" fontSize="23" fontWeight="700" fontFamily="Liberation Sans" fill="#fff">@</text>
        </svg>
      </TB>
      <TB w="w-[160px]" ml="ml-[2px]" t="Skype™ - uhmylkiny">
        <div className="ml-[10px] mr-[5px] w-[29px] h-[29px] shrink-0 rounded-full bg-[#10a8e8] flex items-center justify-center text-white font-bold text-[23px] leading-none font-['Liberation_Sans']">S</div>
      </TB>
      <TB w="w-[160px]" ml="ml-[2px]" t="*Безымянный-2 ..." cls="bg-[radial-gradient(ellipse_40px_14px_at_50%_100%,#777,transparent),linear-gradient(#2c2c2c,#050505)]">
        <div className="ml-[9px] mr-[4px] w-[31px] h-[31px] shrink-0 border-2 border-[#ff3a80] bg-[#2c0413] flex items-center justify-center font-['Liberation_Sans'] font-bold text-[15px] text-[#ff3a80]">Id</div>
      </TB>
      <TB w="w-[160px]" ml="ml-[2px]" t="Работа с текстом ..." cls="bg-[linear-gradient(90deg,#2c6199,#2a6fb8_45%,#0a78e4_87%,#111_87%)]">
        <svg width="30" height="30" viewBox="0 0 30 30" className="ml-[10px] mr-[5px] shrink-0">
          <circle cx="15" cy="15" r="14.5" fill="#dd4b39" />
          <path d="M15 15L28 8A14.5 14.5 0 0 1 15 29.5z" fill="#fbc02d" />
          <path d="M15 15L15 29.5A14.5 14.5 0 0 1 2.5 7.5z" fill="#3aa757" />
          <circle cx="15" cy="15" r="7" fill="#fff" />
          <circle cx="15" cy="15" r="5.2" fill="#4a80e8" />
        </svg>
      </TB>
      <svg width="30" height="28" viewBox="0 0 30 28" className="ml-[17px] mr-[17px] shrink-0">
        <rect x="2" y="3" width="26" height="13" fill="#0c0c0c" />
        <path d="M6 3h6M15 3h7" stroke="#2a4" />
        <rect x="0" y="15" width="30" height="6" fill="#16c4c8" />
        <rect x="6" y="12" width="18" height="5" fill="#0a2a2a" />
        <rect x="0" y="21" width="30" height="3" fill="#9a9a9a" />
        <rect x="7" y="20" width="16" height="5" fill="#1cd8d8" />
      </svg>
      <TB w="w-[159px]" ml="" t="Документ1 - Micr..." cls="border-[#e0d48a]! border-2 bg-[linear-gradient(90deg,#6e6638,#a89c58_50%,#8c8246_75%,#cdbc6c)]">
        <div className="ml-[9px] mr-[7px] w-[28px] h-[30px] shrink-0 bg-[linear-gradient(135deg,#fff,#cfdff5)] border border-[#2a5fb0] flex items-center justify-center text-[#1e56ad] font-['Liberation_Serif'] font-bold text-[24px] leading-none">W</div>
      </TB>
      <div className="flex-1" />
      <span className="text-[12px] text-[#d8d8d8] mr-[7px]">RU</span>
      <div className="w-[15px] h-[15px] rounded-full bg-[#2141b8] border border-[#9ab] flex items-center justify-center text-[10px] font-bold leading-none mr-[10px]">?</div>
      <div className="flex flex-col items-center gap-[4px] mr-[9px]">
        <I w={9} h={8}><rect x="2.5" y="0.5" width="6" height="4" stroke="#eee" /><rect x="0.5" y="3.5" width="6" height="4" stroke="#eee" fill="#000" /></I>
        <Tri s={6} c="#eee" />
      </div>
      <span className="mr-[16px]"><Tri d="up" s={8} c="#ddd" /></span>
      <I w={15} h={14} className="mr-[9px]"><path d="M4 1l3.5 2.5L4 6 .5 3.5zM11 1l3.5 2.5L11 6 7.5 3.5zM4 6l3.5 2.5L4 11 .5 8.5zM11 6l3.5 2.5L11 11 7.5 8.5zM7.5 9.5l3 2-3 2-3-2z" fill="#f0f0f0" /></I>
      <I w={15} h={15} className="mr-[9px]"><path d="M0 5h3l4-4v13l-4-4H0z" fill="#aaa" /><circle cx="10.5" cy="10.5" r="4.5" fill="#e0202a" /><path d="M8 8l5 5" stroke="#fff" strokeWidth="1.5" /></I>
      <I w={13} h={15} className="mr-[10px]"><rect x="0.5" y="3" width="9" height="11" fill="#000" stroke="#eee" strokeWidth="1.5" /><rect x="4" y="5" width="7" height="6" fill="#eee" /><path d="M5 5V2M9 5V2M7.5 11v3" stroke="#eee" strokeWidth="1.4" /></I>
      <I w={15} h={12} className="mr-[22px]"><rect x="0" y="10" width="2" height="2" fill="#eee" /><rect x="3" y="8" width="2" height="4" fill="#eee" /><rect x="6" y="6" width="2" height="6" fill="#eee" /><rect x="9" y="3" width="2" height="9" fill="#eee" /><rect x="12" y="0" width="2" height="12" fill="#eee" /></I>
      <div className="w-[64px] flex flex-col items-center text-[11px] leading-[17px] text-[#e0e0e0] mr-[15px]">
        <span>5:32</span>
        <span>13.12.2015</span>
      </div>
      <div className="w-[14px] h-[39px] border border-[#3c3c3c] bg-[#0e0e0e]" />
    </div>
  );
}

export default function App() {
  return (
    <div className="relative w-[1366px] h-[768px] overflow-hidden flex flex-col bg-[#474747] font-['Noto_Sans',sans-serif]">
      <TitleBar />
      <ControlBar />
      <div className="flex-1 min-h-0 flex">
        <div className="w-[1199px] shrink-0 flex flex-col">
          <Tabs />
          <TopRuler />
          <div className="flex-1 min-h-0 flex">
            <LeftRuler />
            <Canvas />
            <VScroll />
            <div className="w-px bg-[#2a2a2a]" />
          </div>
          <Status />
        </div>
        <Dock />
      </div>
      <Toolbox />
      <Taskbar />
    </div>
  );
}
